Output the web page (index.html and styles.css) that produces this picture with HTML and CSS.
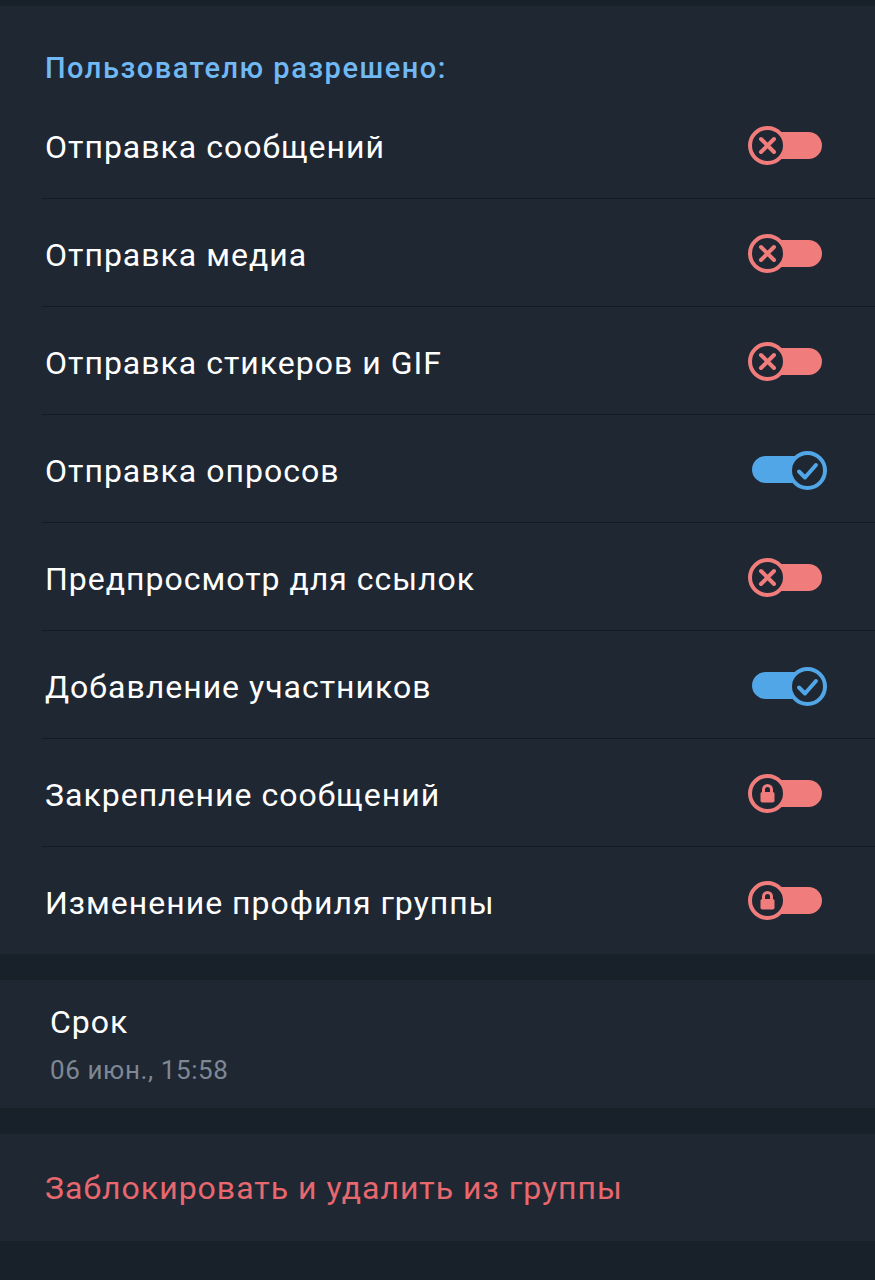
FILE: index.html
```html
<!DOCTYPE html>
<html lang="ru">
<head>
<meta charset="utf-8">
<link rel="stylesheet" href="styles.css">
</head>
<body>
<div class="top-strip"></div>
<section class="section perms">
  <div class="header">Пользователю разрешено:</div>
  <div class="row"><span class="label">Отправка сообщений</span>
    <span class="toggle off"><span class="track"></span><span class="knob"><svg viewBox="0 0 39 39"><circle cx="19.5" cy="19.5" r="17.5"/><path class="ico" d="M13 13 L26 26 M26 13 L13 26"/></svg></span></span></div>
  <div class="row"><span class="label">Отправка медиа</span>
    <span class="toggle off"><span class="track"></span><span class="knob"><svg viewBox="0 0 39 39"><circle cx="19.5" cy="19.5" r="17.5"/><path class="ico" d="M13 13 L26 26 M26 13 L13 26"/></svg></span></span></div>
  <div class="row"><span class="label">Отправка стикеров и GIF</span>
    <span class="toggle off"><span class="track"></span><span class="knob"><svg viewBox="0 0 39 39"><circle cx="19.5" cy="19.5" r="17.5"/><path class="ico" d="M13 13 L26 26 M26 13 L13 26"/></svg></span></span></div>
  <div class="row"><span class="label">Отправка опросов</span>
    <span class="toggle on"><span class="track"></span><span class="knob"><svg viewBox="0 0 39 39"><circle cx="19.5" cy="19.5" r="17.5"/><path class="ico" d="M11 20.5 L17 26.5 L28 14"/></svg></span></span></div>
  <div class="row"><span class="label">Предпросмотр для ссылок</span>
    <span class="toggle off"><span class="track"></span><span class="knob"><svg viewBox="0 0 39 39"><circle cx="19.5" cy="19.5" r="17.5"/><path class="ico" d="M13 13 L26 26 M26 13 L13 26"/></svg></span></span></div>
  <div class="row"><span class="label">Добавление участников</span>
    <span class="toggle on"><span class="track"></span><span class="knob"><svg viewBox="0 0 39 39"><circle cx="19.5" cy="19.5" r="17.5"/><path class="ico" d="M11 20.5 L17 26.5 L28 14"/></svg></span></span></div>
  <div class="row"><span class="label">Закрепление сообщений</span>
    <span class="toggle off"><span class="track"></span><span class="knob"><svg viewBox="0 0 39 39"><circle cx="19.5" cy="19.5" r="17.5"/><path class="shackle" d="M15.5 18.5 V15.5 A4 4 0 0 1 23.5 15.5 V18.5"/><rect class="lockbody" x="12.5" y="18" width="14" height="10.5" rx="1.8"/></svg></span></span></div>
  <div class="row last"><span class="label">Изменение профиля группы</span>
    <span class="toggle off"><span class="track"></span><span class="knob"><svg viewBox="0 0 39 39"><circle cx="19.5" cy="19.5" r="17.5"/><path class="shackle" d="M15.5 18.5 V15.5 A4 4 0 0 1 23.5 15.5 V18.5"/><rect class="lockbody" x="12.5" y="18" width="14" height="10.5" rx="1.8"/></svg></span></span></div>
</section>
<div class="gap"></div>
<section class="section term">
  <div class="term-title">Срок</div>
  <div class="term-value">06 июн., 15:58</div>
</section>
<div class="gap"></div>
<section class="section ban">
  <div class="ban-text">Заблокировать и удалить из группы</div>
</section>
</body>
</html>
```

FILE: styles.css
```css
html, body {
  margin: 0;
  padding: 0;
}
body {
  background: #18202a;
  font-family: Roboto, "Noto Sans", sans-serif;
  width: 875px;
  height: 1280px;
  overflow: hidden;
}
.top-strip {
  height: 6px;
}
.section {
  background: #1f2733;
}
.header {
  height: 85px;
  box-sizing: border-box;
  padding: 44px 0 0 45px;
  font-size: 29px;
  line-height: 36px;
  font-weight: 500;
  letter-spacing: 1.5px;
  color: #71b9f4;
}
.row {
  height: 108px;
  box-sizing: border-box;
  position: relative;
  display: flex;
  align-items: center;
  justify-content: space-between;
  padding: 0 48px 0 45px;
}
.row::after {
  content: "";
  position: absolute;
  left: 42px;
  right: 0;
  bottom: 0;
  height: 1px;
  background: #141a22;
}
.row.last {
  height: 107px;
}
.row.last::after {
  display: none;
}
.label {
  font-size: 32px;
  letter-spacing: 1px;
  color: #ffffff;
  padding-top: 4px;
}
.toggle {
  position: relative;
  width: 79px;
  height: 39px;
  flex: none;
}
.track {
  position: absolute;
  left: 4px;
  top: 6px;
  height: 27px;
  border-radius: 14px;
}
.knob {
  position: absolute;
  top: 0;
  width: 39px;
  height: 39px;
}
.knob svg {
  display: block;
  width: 39px;
  height: 39px;
}
.knob circle {
  fill: #1f2733;
  stroke-width: 4px;
}
.knob .ico {
  fill: none;
  stroke-width: 4px;
  stroke-linecap: round;
  stroke-linejoin: round;
}
.toggle.off .track {
  width: 70px;
  background: #f07c7c;
}
.toggle.off .knob {
  left: 0;
}
.toggle.off circle,
.toggle.off .ico {
  stroke: #f07c7c;
}
.toggle.off .shackle {
  fill: none;
  stroke: #f07c7c;
  stroke-width: 3px;
}
.toggle.off .lockbody {
  fill: #f07c7c;
}
.toggle.on .track {
  width: 66px;
  background: #51a6e8;
}
.toggle.on .knob {
  left: 40px;
  top: 1px;
}
.toggle.on circle,
.toggle.on .ico {
  stroke: #51a6e8;
}
.gap {
  height: 26px;
}
.term {
  height: 128px;
  box-sizing: border-box;
  padding: 23px 0 0 50px;
}
.term-title {
  font-size: 32px;
  line-height: 38px;
  letter-spacing: 1px;
  color: #ffffff;
}
.term-value {
  margin-top: 14px;
  font-size: 26px;
  line-height: 30px;
  letter-spacing: 0.6px;
  color: #7e8893;
}
.ban {
  height: 107px;
  box-sizing: border-box;
  padding: 36px 0 0 45px;
}
.ban-text {
  font-size: 32px;
  line-height: 36px;
  letter-spacing: 1px;
  color: #e8686e;
}
```
